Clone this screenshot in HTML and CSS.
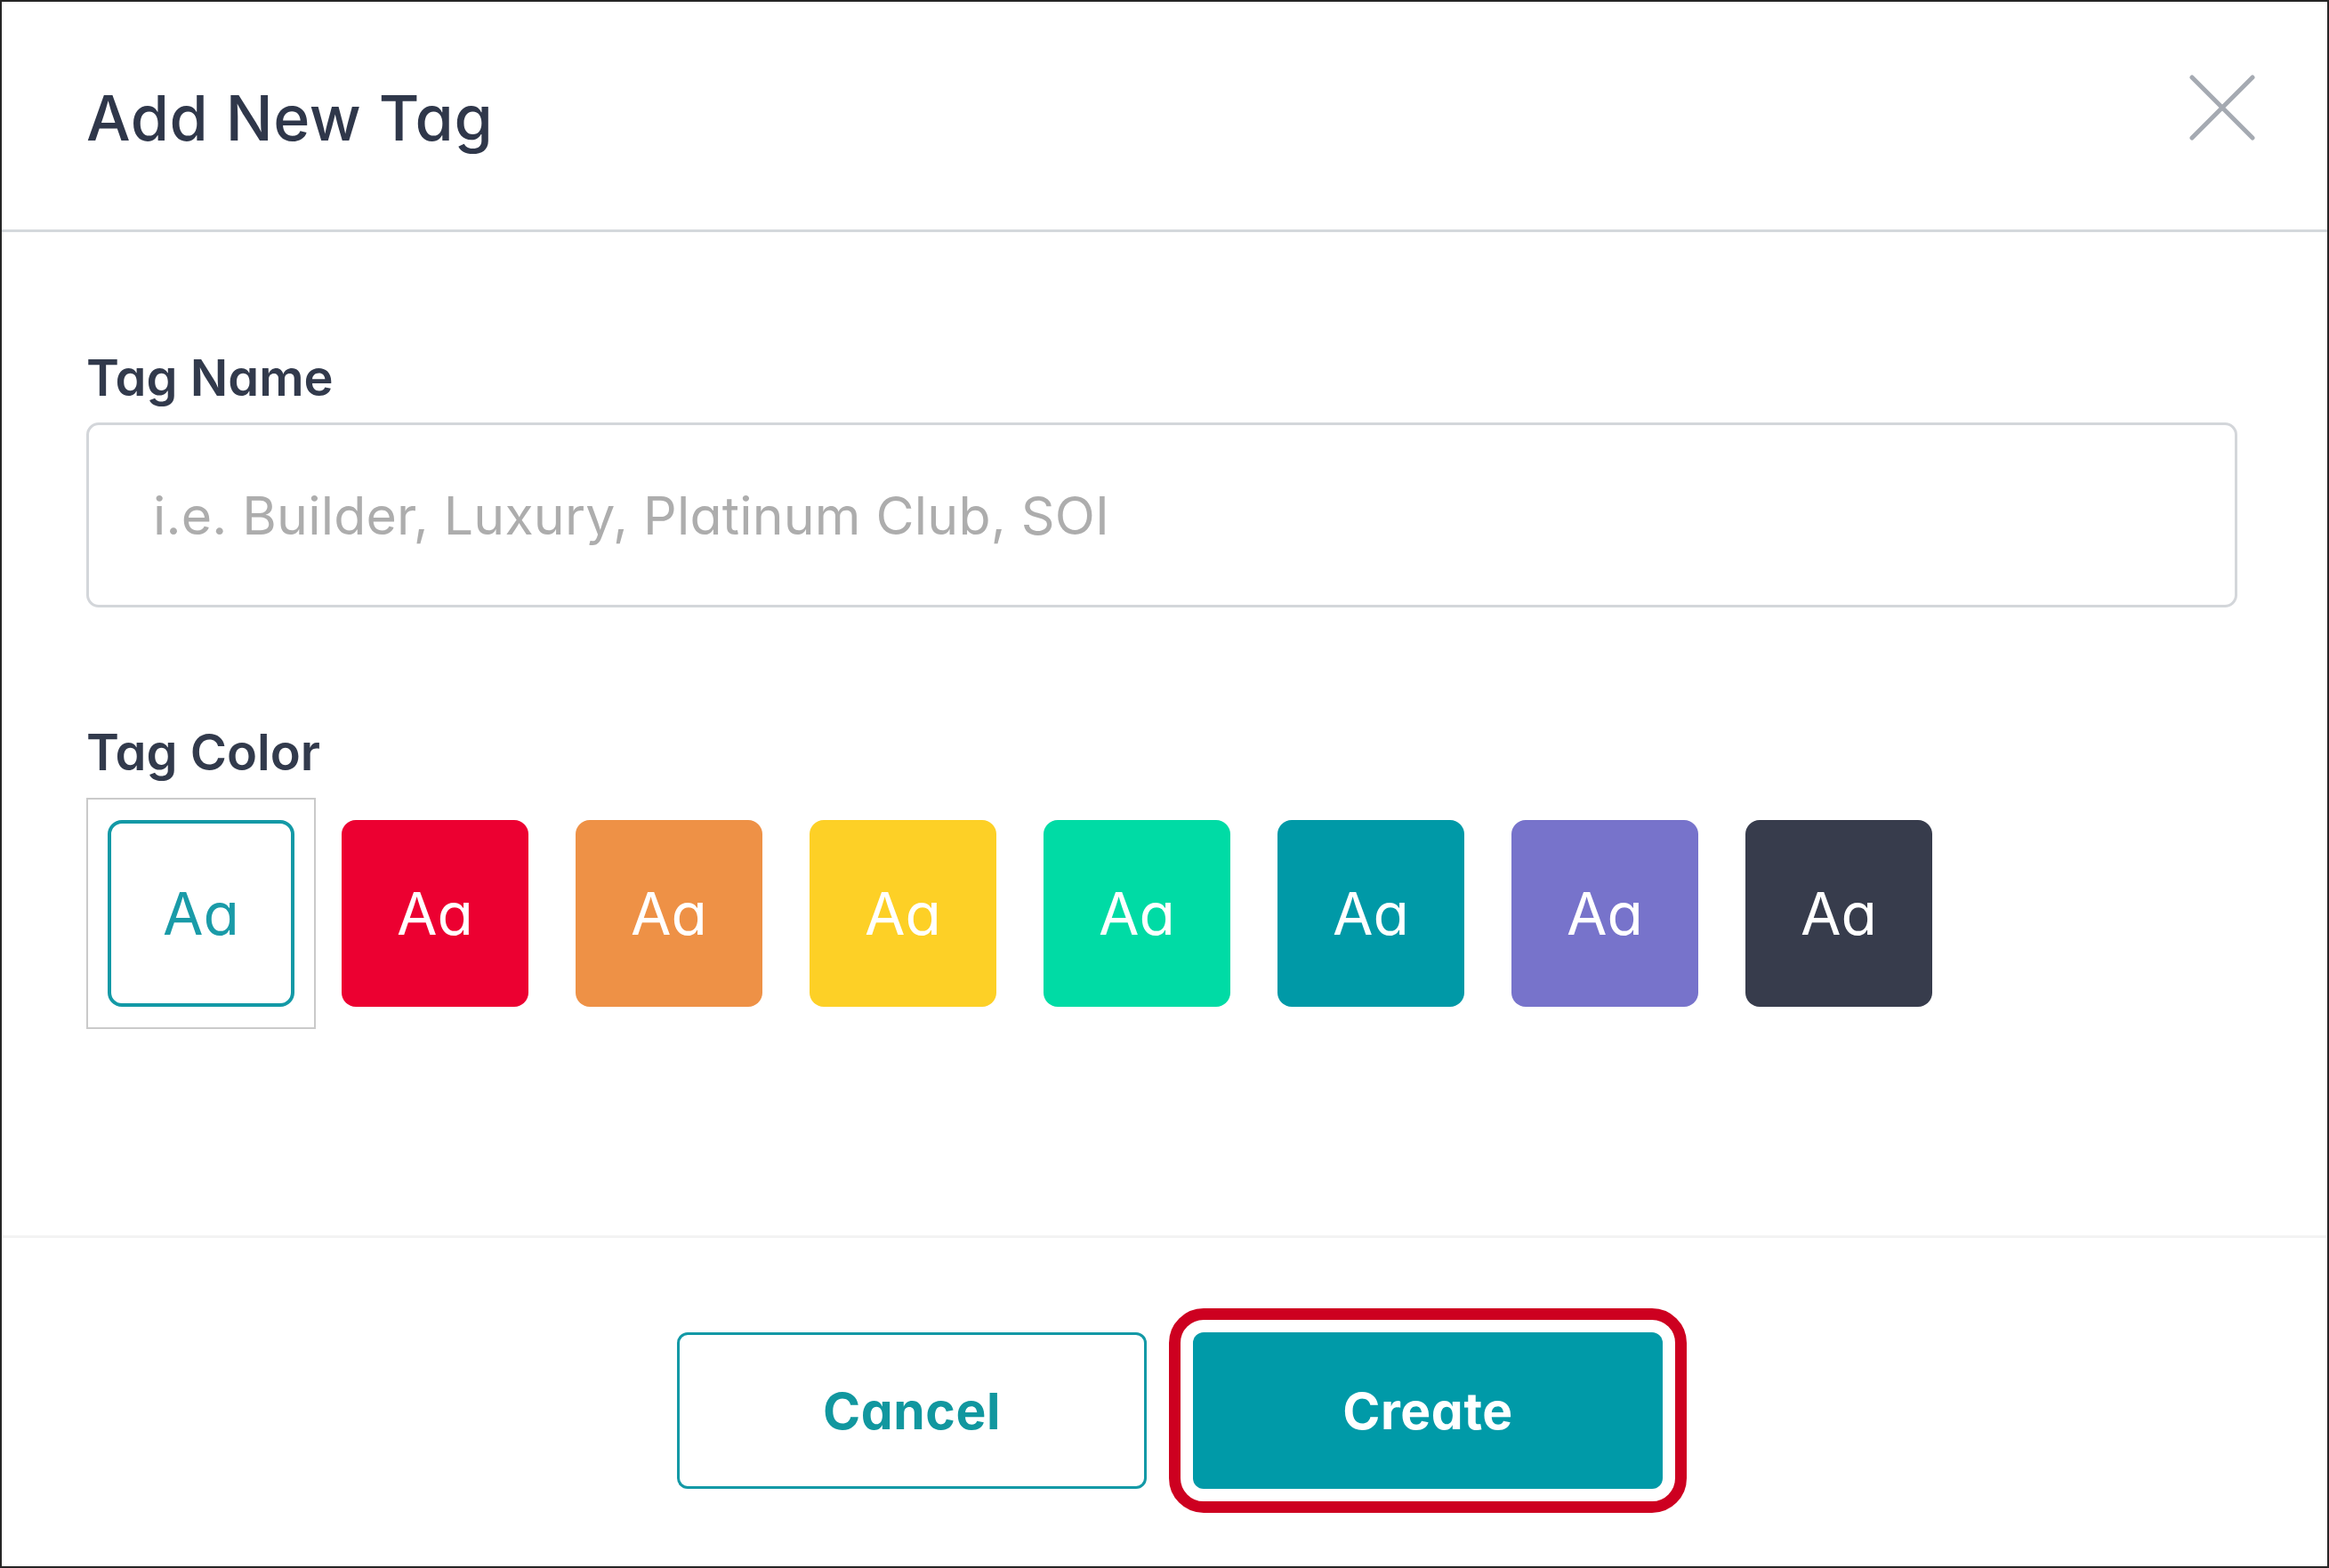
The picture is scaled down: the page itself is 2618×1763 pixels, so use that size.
FILE: index.html
```html
<!DOCTYPE html>
<html lang="en">
<head>
<meta charset="utf-8">
<title>Add New Tag</title>
<link rel="stylesheet" href="styles.css">
</head>
<body>
<div class="modal">
  <header class="modal-header">
    <h1 class="modal-title">Add New Tag</h1>
    <button class="close-btn" aria-label="Close">
      <svg width="74" height="74" viewBox="0 0 74 74"><path d="M3 3 L71 71 M71 3 L3 71" stroke="#a5aab2" stroke-width="5" stroke-linecap="round" fill="none"/></svg>
    </button>
  </header>
  <main class="modal-body">
    <label class="field-label" for="tagname">Tag Name</label>
    <input class="text-input" id="tagname" type="text" placeholder="i.e. Builder, Luxury, Platinum Club, SOI">
    <div class="field-label color-label">Tag Color</div>
    <div class="swatches">
      <div class="swatch-wrap selected"><div class="swatch sw-white">Aa</div></div>
      <div class="swatch-wrap"><div class="swatch sw-red">Aa</div></div>
      <div class="swatch-wrap"><div class="swatch sw-orange">Aa</div></div>
      <div class="swatch-wrap"><div class="swatch sw-yellow">Aa</div></div>
      <div class="swatch-wrap"><div class="swatch sw-green">Aa</div></div>
      <div class="swatch-wrap"><div class="swatch sw-teal">Aa</div></div>
      <div class="swatch-wrap"><div class="swatch sw-purple">Aa</div></div>
      <div class="swatch-wrap"><div class="swatch sw-dark">Aa</div></div>
    </div>
  </main>
  <footer class="modal-footer">
    <button class="btn btn-outline">Cancel</button>
    <button class="btn btn-primary highlighted">Create</button>
  </footer>
</div>
</body>
</html>
```
FILE: styles.css
```css
* { box-sizing: border-box; }
html, body { margin: 0; padding: 0; background: #fff; }
body {
  font-family: Inter, "Noto Sans", sans-serif;
  font-feature-settings: "cv11" 1;
}
.modal {
  width: 2618px;
  height: 1763px;
  border: 2px solid #262626;
  display: flex;
  flex-direction: column;
  background: #fff;
}
.modal-header {
  height: 259px;
  flex: none;
  display: flex;
  justify-content: space-between;
  align-items: flex-start;
  padding: 82px 81px 0 95px;
  border-bottom: 3px solid #d4d8dc;
}
.modal-title {
  margin: 14px 0 0 0;
  font-size: 70px;
  line-height: 1;
  font-weight: 500;
  letter-spacing: 0.6px;
  color: #2f374a;
}
.close-btn {
  border: 0;
  background: none;
  padding: 0;
  margin: 0;
  width: 74px;
  height: 74px;
  display: block;
}
.close-btn svg { display: block; }
.modal-body {
  flex: 1;
  padding: 136px 101px 0 95px;
  display: flex;
  flex-direction: column;
  align-items: stretch;
}
.field-label {
  font-size: 56px;
  line-height: 1;
  font-weight: 600;
  color: #323a4c;
  margin-bottom: 22px;
}
.color-label {
  margin-top: 135px;
  margin-bottom: 23px;
}
.text-input {
  height: 208px;
  border: 3px solid #d3d6da;
  border-radius: 14px;
  padding: 0 0 0 72px;
  font-family: Inter, "Noto Sans", sans-serif;
  font-feature-settings: "cv11" 1;
  font-size: 59px;
  color: #333;
  outline: none;
  background: #fff;
}
.text-input::placeholder {
  color: #adadad;
  letter-spacing: 0.2px;
}
.swatches {
  display: flex;
  gap: 5px;
}
.swatch-wrap {
  width: 258px;
  height: 260px;
  border: 2px solid transparent;
  display: flex;
  align-items: center;
  justify-content: center;
}
.swatch-wrap.selected { border-color: #cacaca; }
.swatch {
  width: 210px;
  height: 210px;
  border-radius: 16px;
  display: flex;
  align-items: center;
  justify-content: center;
  font-size: 66px;
  line-height: 1;
  font-weight: 400;
  color: #fff;
}
.sw-white { background: #fff; border: 4px solid #1399a6; color: #1a9ba8; }
.sw-red { background: #ec0031; }
.sw-orange { background: #ee9146; }
.sw-yellow { background: #fdd026; }
.sw-green { background: #00dba5; }
.sw-teal { background: #0099a7; }
.sw-purple { background: #7773cb; }
.sw-dark { background: #373c4c; }
.modal-footer {
  height: 372px;
  flex: none;
  border-top: 3px solid #f3f3f3;
  display: flex;
  justify-content: center;
  align-items: flex-start;
  gap: 52px;
  padding: 106px 0 0 12px;
}
.btn {
  width: 528px;
  height: 176px;
  border-radius: 12px;
  font-family: Inter, "Noto Sans", sans-serif;
  font-feature-settings: "cv11" 1;
  font-size: 57px;
  font-weight: 700;
  letter-spacing: 0.6px;
  line-height: 1;
  padding: 0;
  cursor: pointer;
}
.btn-outline {
  background: #fff;
  border: 3px solid #1399a6;
  color: #11979f;
}
.btn-primary {
  background: #009aa8;
  border: 0;
  color: #fff;
}
.highlighted {
  outline: 13px solid #cd0020;
  outline-offset: 14px;
}
```
